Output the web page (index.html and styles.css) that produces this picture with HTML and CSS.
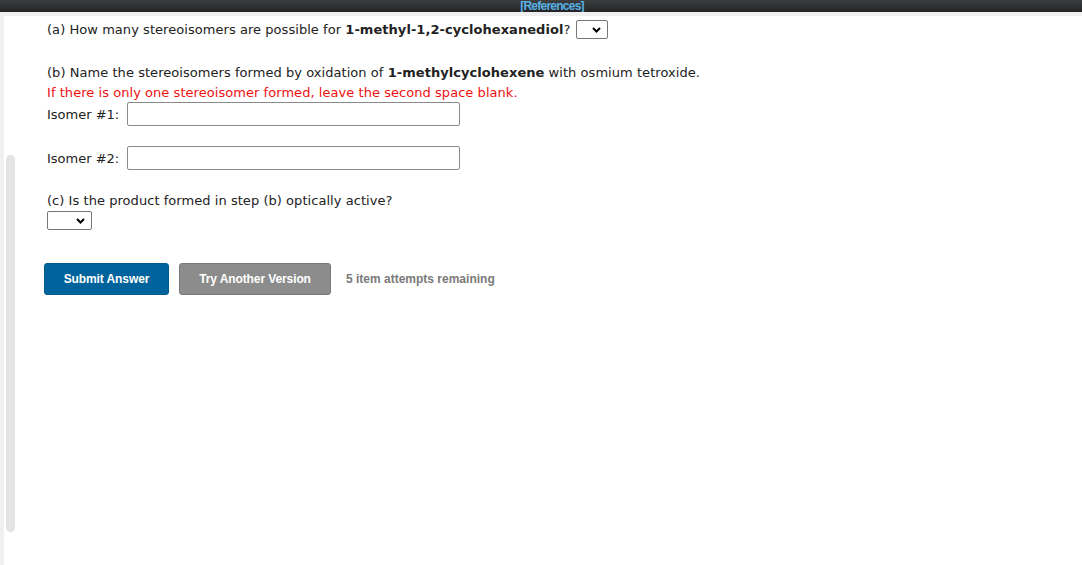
FILE: index.html
```html
<!DOCTYPE html>
<html>
<head>
<meta charset="utf-8">
<link rel="stylesheet" href="styles.css">
</head>
<body>
<div class="topbar"><span class="refs">[References]</span></div>
<div class="subbar"></div>
<div class="page">
  <div class="rail"></div>
  <div class="track"><div class="thumb"></div></div>
  <div class="content">
    <p class="line qa">(a) How many stereoisomers are possible for <b>1-methyl-1,2-cyclohexanediol</b>? <span class="select sel-a"><svg class="chev" width="9" height="6" viewBox="0 0 9 6"><path d="M1 1 L4.5 4.5 L8 1" fill="none" stroke="#000" stroke-width="2"/></svg></span></p>
    <p class="line qb">(b) Name the stereoisomers formed by oxidation of <b>1-methylcyclohexene</b> with osmium tetroxide.</p>
    <p class="line red">If there is only one stereoisomer formed, leave the second space blank.</p>
    <div class="row"><span class="label">Isomer #1:</span><span class="input"></span></div>
    <div class="row row2"><span class="label">Isomer #2:</span><span class="input"></span></div>
    <p class="line qc">(c) Is the product formed in step (b) optically active?</p>
    <div class="selrow"><span class="select sel-c"><svg class="chev" width="9" height="6" viewBox="0 0 9 6"><path d="M1 1 L4.5 4.5 L8 1" fill="none" stroke="#000" stroke-width="2"/></svg></span></div>
    <div class="actions">
      <span class="btn btn-primary">Submit Answer</span>
      <span class="btn btn-gray">Try Another Version</span>
      <span class="attempts">5 item attempts remaining</span>
    </div>
  </div>
</div>
</body>
</html>
```
FILE: styles.css
```css
html, body {
  margin: 0;
  padding: 0;
  background: #ffffff;
}
body {
  font-family: "DejaVu Sans", Verdana, sans-serif;
  font-size: 13px;
  color: #222;
  width: 1082px;
  height: 565px;
  overflow: hidden;
}
.topbar {
  height: 12px;
  background: linear-gradient(#3d3e40, #232425);
  text-align: center;
  padding-left: 22px;
  overflow: hidden;
}
.refs {
  font-family: "Liberation Sans", Arial, sans-serif;
  font-weight: bold;
  font-size: 12px;
  line-height: 12px;
  letter-spacing: -0.75px;
  color: #5ab2e6;
  display: inline-block;
  position: relative;
  top: -2px;
}
.subbar {
  height: 4px;
  background: #efefef;
}
.page {
  display: flex;
  height: 549px;
}
.rail {
  width: 4px;
  background: #f0f0f0;
}
.track {
  width: 11px;
  padding-left: 2px;
  box-sizing: border-box;
}
.thumb {
  margin-top: 139px;
  width: 9px;
  height: 377px;
  border-radius: 5px;
  background: #e4e4e4;
}
.content {
  padding-left: 32px;
}
.line {
  margin: 0;
  line-height: 20px;
  white-space: nowrap;
  letter-spacing: 0.05px;
}
.qa { margin-top: 4px; }
.qb { margin-top: 23px; }
.red { color: #ee1111; line-height: 19px; }
.select {
  display: inline-flex;
  align-items: center;
  justify-content: flex-end;
  box-sizing: border-box;
  height: 19px;
  border: 1px solid #767676;
  border-radius: 2px;
  background: #fff;
  vertical-align: middle;
  padding-right: 6px;
}
.sel-a { width: 32px; margin-left: 1px; position: relative; top: -1px; }
.sel-c { width: 45px; }
.chev { display: block; }
.row {
  display: flex;
  align-items: center;
  height: 24px;
}
.row2 { margin-top: 20px; }
.label {
  width: 80px;
}
.input {
  box-sizing: border-box;
  width: 333px;
  height: 24px;
  border: 1px solid #8a8a8a;
  border-radius: 2px;
  background: #fff;
}
.qc { margin-top: 21px; }
.selrow {
  margin-top: 0;
  height: 19px;
  display: flex;
}
.actions {
  margin-top: 33px;
  margin-left: -3px;
  display: flex;
  align-items: center;
  font-family: "Liberation Sans", Arial, sans-serif;
  font-weight: bold;
  font-size: 12px;
}
.btn {
  box-sizing: border-box;
  height: 32px;
  display: inline-flex;
  align-items: center;
  justify-content: center;
  border-radius: 3px;
  color: #fff;
  letter-spacing: -0.1px;
}
.btn-primary {
  width: 125px;
  background: #00639c;
  border: 1px solid #005a8e;
}
.btn-gray {
  width: 152px;
  margin-left: 10px;
  background: #8c8c8c;
  border: 1px solid #7a7a7a;
}
.attempts {
  margin-left: 15px;
  color: #7a7a7a;
}
```
